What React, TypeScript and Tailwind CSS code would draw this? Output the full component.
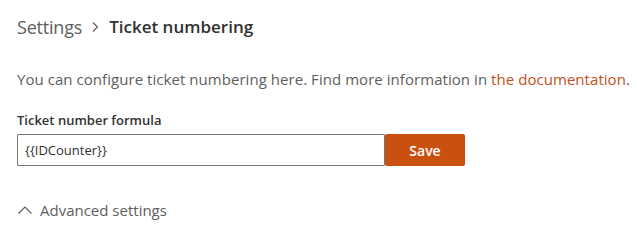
export default function App() {
  return (
    <div
      className="w-[637px] h-[240px] bg-white pl-[17px] pt-[15px]"
      style={{ fontFamily: '"Open Sans", "Noto Sans", sans-serif' }}
    >
      <div className="flex items-center h-[24px] leading-[24px]">
        <span className="text-[18px] tracking-[-0.2px] text-[#605e5c]">Settings</span>
        <svg
          className="mx-[10px]"
          width="7"
          height="14"
          viewBox="0 0 7 14"
          fill="none"
          stroke="#605e5c"
          strokeWidth="1.2"
        >
          <path d="M1 2.5l4.5 4.5-4.5 4.5" />
        </svg>
        <span className="text-[17px] font-semibold text-[#323130]">Ticket numbering</span>
      </div>

      <p className="mt-[30px] text-[15px] leading-[20px] tracking-[0.05px] text-[#605e5c]">
        You can configure ticket numbering here. Find more information in{" "}
        <a className="text-[#c4501a]" href="#">
          the documentation
        </a>
        .
      </p>

      <div className="mt-[21px] text-[13px] leading-[20px] font-semibold text-[#323130]">
        Ticket number formula
      </div>
      <div className="mt-[4px] flex h-[32px]">
        <input
          className="w-[368px] h-[32px] border border-[#797775] rounded-[1px] px-[7px] text-[13px] text-[#323130] outline-none"
          defaultValue="{{IDCounter}}"
        />
        <button className="w-[80px] h-[32px] bg-[#ca5010] text-white text-[14px] font-semibold rounded-[2px]">
          Save
        </button>
      </div>

      <div className="mt-[34px] flex items-center h-[20px] text-[15px] text-[#605e5c]">
        <svg
          width="16"
          height="10"
          viewBox="0 0 16 10"
          fill="none"
          stroke="#605e5c"
          strokeWidth="1.2"
        >
          <path d="M1.5 8.5L8 2l6.5 6.5" />
        </svg>
        <span className="ml-[7px]">Advanced settings</span>
      </div>
    </div>
  );
}
